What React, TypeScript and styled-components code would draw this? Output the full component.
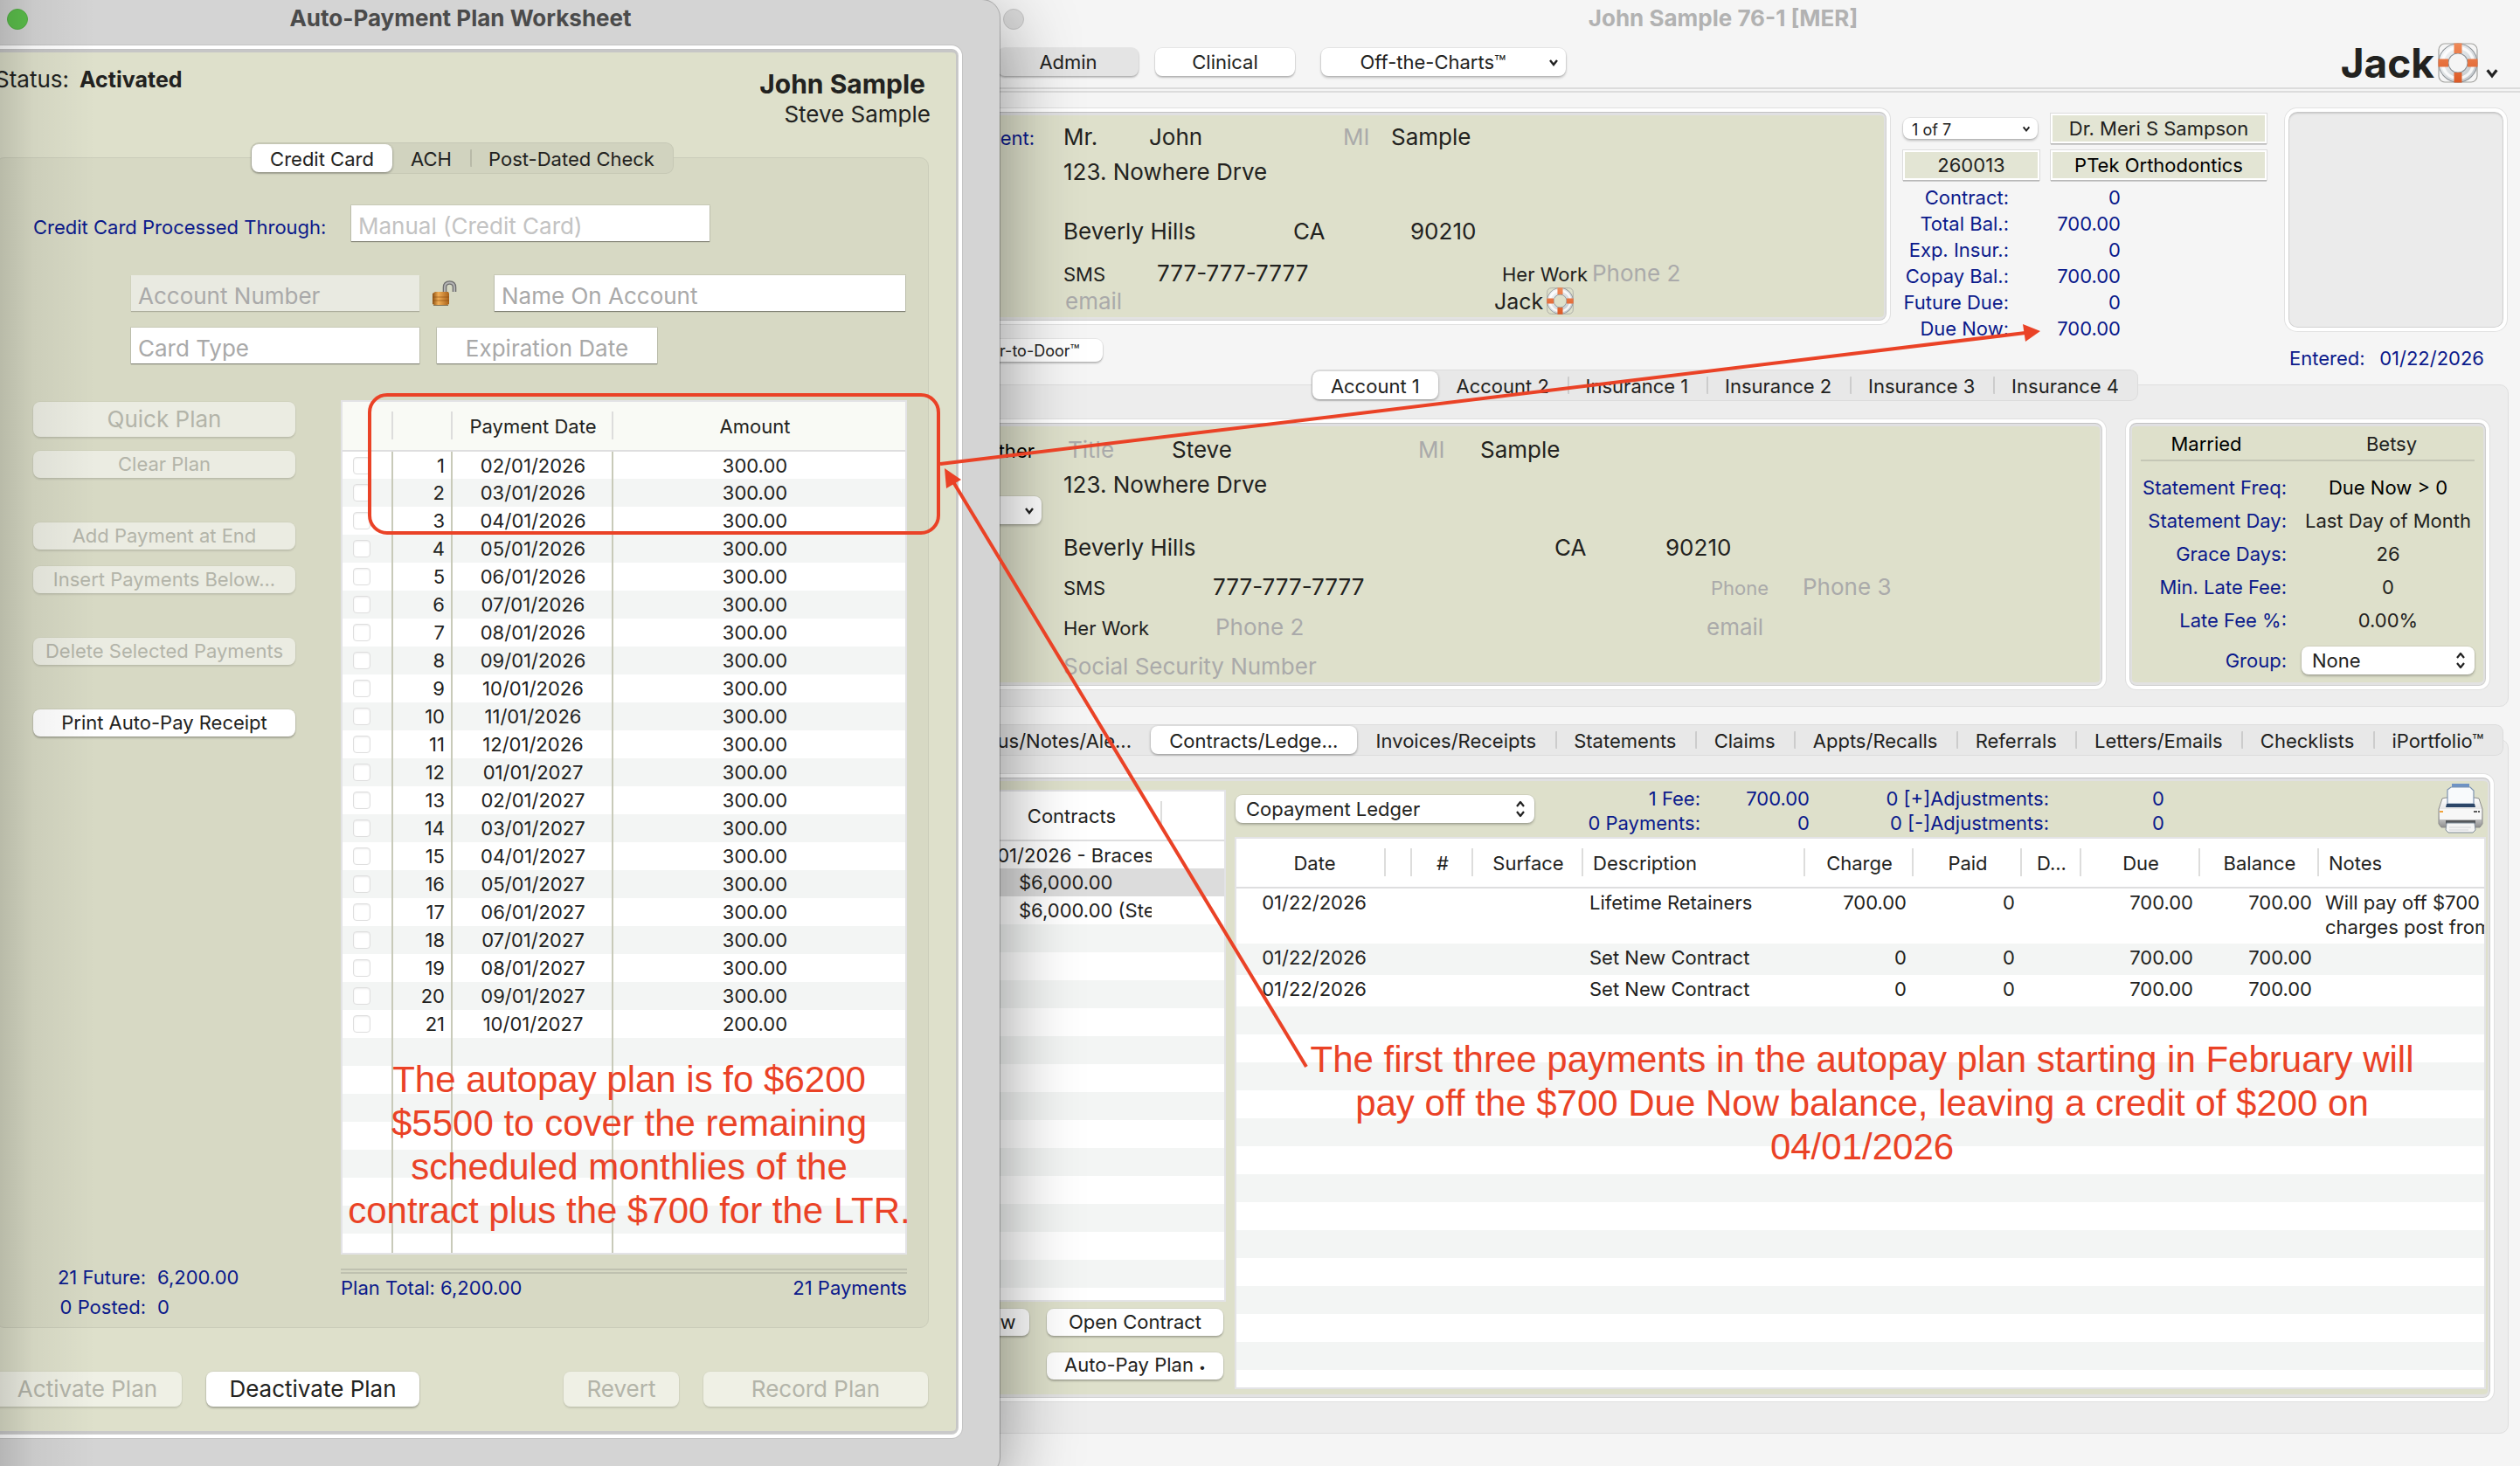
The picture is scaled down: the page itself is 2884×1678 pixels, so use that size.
import React from "react";
import styled, { createGlobalStyle, css } from "styled-components";

const olive = "#dee0cb";
const navy = "#0b1a8b";
const ink = "#222220";
const ghost = "#aaaaaa";
const stripe = "#f3f5f4";
const red = "#ea4226";

const GlobalStyle = createGlobalStyle`
  *, *::before, *::after { box-sizing: border-box; }
  html, body, #root { height: 100%; }
  body {
    margin: 0;
    overflow: hidden;
    color: ${ink};
    font-family: Inter, "Liberation Sans", sans-serif;
    font-size: 22px;
    line-height: 30px;
  }
  button, input, select {
    margin: 0;
    color: inherit;
    font: inherit;
  }
  table { border-collapse: collapse; border-spacing: 0; }
  th, td { padding: 0; font-weight: 400; }
`;

/* ---------- desktop and windows ---------- */

const Desktop = styled.div`
  position: relative;
  height: 100%;
  overflow: hidden;
  background: #f5f5f5;
`;

const MainWindow = styled.main`
  position: absolute;
  inset: 0 0 0 1064px;
  display: flex;
  flex-direction: column;
  background: #f5f5f5;
`;

const DialogWindow = styled.section`
  position: absolute;
  inset: 0 auto -10px -40px;
  width: 1184px;
  display: flex;
  flex-direction: column;
  padding: 0 43px 42px 12px;
  border-radius: 0 20px 20px 0;
  background: #d4d4d4;
  box-shadow: 0 0 0 1px rgba(0, 0, 0, 0.24), 0 24px 90px rgba(0, 0, 0, 0.44);

  &::after {
    content: "";
    position: absolute;
    inset: 0 auto 0 40px;
    width: 110px;
    background: linear-gradient(90deg, rgba(0, 0, 0, 0.14), rgba(0, 0, 0, 0.05) 35%, transparent);
    pointer-events: none;
  }
`;

const TitleBar = styled.header<{ $height: number; $left: number; $right: number; $muted?: boolean }>`
  display: flex;
  align-items: flex-start;
  flex: none;
  height: ${(p) => p.$height}px;
  padding: 0 ${(p) => p.$right}px 0 ${(p) => p.$left}px;
  color: ${(p) => (p.$muted ? "#b2b2b2" : "#4b4b4b")};
`;

const ZoomDot = styled.button<{ $active?: boolean }>`
  width: 24px;
  height: 24px;
  margin-top: 10px;
  padding: 0;
  border: 1px solid ${(p) => (p.$active ? "#52b043" : "#c6c6c6")};
  border-radius: 50%;
  background: ${(p) => (p.$active ? "#5cc04c" : "#dcdcdc")};
`;

const WindowTitle = styled.h1`
  flex: 1;
  margin: 0;
  font-size: 26px;
  font-weight: 700;
  line-height: 42px;
  text-align: center;
`;

const Frame = styled.div<{ $fill?: string; $edge?: string }>`
  border: 4px solid #fff;
  border-radius: 12px;
  background: ${(p) => p.$fill ?? olive};
  box-shadow:
    0 0 0 1px ${(p) => p.$edge ?? "#e0e0e0"},
    inset 0 1px 0 #c2c2c2,
    inset 0 0 0 1px #cfcfcf,
    inset 0 4px 0 ${(p) => (p.$edge ? "#c6c6c6" : "#e0e0e2")},
    inset 0 -4px 0 ${(p) => (p.$edge ? "#c9c9c9" : "#e2e2e2")},
    inset 3px 0 0 ${(p) => (p.$edge ? "#c6c6c6" : "#e0e0e0")},
    inset -3px 0 0 ${(p) => (p.$edge ? "#c6c6c6" : "#e0e0e0")};
`;

/* ---------- controls ---------- */

const PushButton = styled.button<{ $w?: number; $h?: number; $size?: number; $pressed?: boolean; $wide?: boolean }>`
  flex: none;
  width: ${(p) => (p.$wide ? "100%" : `${p.$w}px`)};
  height: ${(p) => p.$h ?? 31}px;
  padding: 0 0 1px;
  border: 0;
  border-radius: 8px;
  background: ${(p) => (p.$pressed ? "#e4e4e4" : "#fff")};
  box-shadow: 0 0 0 1px rgba(0, 0, 0, 0.06), 0 2px 2px rgba(0, 0, 0, 0.22);
  font-size: ${(p) => p.$size ?? 22}px;
  line-height: 28px;
  white-space: nowrap;

  small { font-size: 14px; }

  &:disabled {
    background: rgba(255, 255, 255, 0.5);
    box-shadow: 0 0 0 1px rgba(0, 0, 0, 0.03), 0 2px 2px rgba(0, 0, 0, 0.1);
    color: #b3b4a9;
  }
`;

const SelectBox = styled.span<{ $w: number; $h: number; $size?: number; $center?: boolean }>`
  position: relative;
  display: block;
  flex: none;
  width: ${(p) => p.$w}px;
  height: ${(p) => p.$h}px;

  select {
    display: block;
    width: 100%;
    height: 100%;
    padding: 0 24px 0 ${(p) => (p.$center ? 0 : p.$size ? 10 : 12)}px;
    border: 0;
    border-radius: 8px;
    background: #fff;
    box-shadow: 0 0 0 1px rgba(0, 0, 0, 0.06), 0 2px 3px rgba(0, 0, 0, 0.24);
    appearance: none;
    font-size: ${(p) => p.$size ?? 22}px;
    line-height: 28px;
    text-align-last: ${(p) => (p.$center ? "center" : "left")};
  }

  svg {
    position: absolute;
    top: 0;
    right: 8px;
    height: 100%;
    pointer-events: none;
  }
`;

function Chevron({ size = 12 }: { size?: number }) {
  return (
    <svg width={size} viewBox="0 0 12 12" fill="none" stroke="#222" strokeWidth="2.4" aria-hidden="true">
      <path d="M2 4l4 5 4-5" />
    </svg>
  );
}

function UpDown() {
  return (
    <svg width="16" viewBox="0 0 16 24" fill="none" stroke="#222" strokeWidth="2.2" strokeLinejoin="round" aria-hidden="true">
      <path d="M4 9l4-5 4 5M4 15l4 5 4-5" />
    </svg>
  );
}

const Segments = styled.div<{ $w?: number; $fill: string }>`
  display: flex;
  align-items: stretch;
  width: ${(p) => (p.$w ? `${p.$w}px` : "auto")};
  height: 36px;
  margin: ${(p) => (p.$w ? "-18px auto 0" : "-18px 5px 0 0")};
  padding: 2px 1px;
  border: 0;
  border-radius: 9px;
  background: ${(p) => p.$fill};
  box-shadow: inset 0 0 0 1px rgba(0, 0, 0, 0.05);
`;

const Segment = styled.button<{ $divider?: boolean }>`
  flex: 1 1 auto;
  padding: 2px 12px 0;
  border: 0;
  border-radius: 8px;
  background: ${(p) =>
    p.$divider ? "linear-gradient(rgba(0,0,0,.12), rgba(0,0,0,.12)) left center / 2px 20px no-repeat" : "transparent"};
  line-height: 28px;
  white-space: nowrap;

  &[aria-selected="true"] {
    background: #fff;
    box-shadow: 0 1px 3px rgba(0, 0, 0, 0.4);
  }
`;

function SegmentBar({ items, selected, width, fill, label }: { items: string[]; selected: number; width?: number; fill: string; label: string }) {
  return (
    <Segments role="tablist" aria-label={label} $w={width} $fill={fill}>
      {items.map((item, i) => (
        <Segment key={item} role="tab" aria-selected={i === selected} $divider={i > 0 && i !== selected && i !== selected + 1}>
          {item}
        </Segment>
      ))}
    </Segments>
  );
}

const GroupBox = styled.section<{ $grow?: boolean; $top: number }>`
  display: flex;
  flex-direction: column;
  flex: ${(p) => (p.$grow ? "1 1 0" : "none")};
  min-height: 0;
  margin: ${(p) => p.$top}px 13px ${(p) => (p.$grow ? 37 : 0)}px;
  border: 1px solid #dfdfdf;
  border-radius: 10px;
  background: #ededed;
`;

const Field = styled.input<{ $w: number; $small?: boolean; $indent?: number }>`
  flex: none;
  width: ${(p) => p.$w}px;
  height: 36px;
  padding: 0 0 0 ${(p) => p.$indent ?? 0}px;
  border: 0;
  outline: 0;
  background: transparent;
  font-size: ${(p) => (p.$small ? 22 : 26)}px;

  &::placeholder { color: ${ghost}; opacity: 1; }
`;

const BoxedField = styled.input<{ $w: number; $center?: boolean; $light?: boolean }>`
  flex: none;
  width: ${(p) => p.$w}px;
  height: 41px;
  padding: 6px 8px 0;
  border: 0;
  background: #fff;
  box-shadow: 0 0 0 1px rgba(0, 0, 0, 0.07), 0 1px 1px rgba(0, 0, 0, 0.35);
  font-size: 26px;
  text-align: ${(p) => (p.$center ? "center" : "left")};

  &::placeholder { color: ${(p) => (p.$light ? "#c3c3c3" : "#a9a9a9")}; opacity: 1; }
  &:disabled { background: #e9eae1; box-shadow: 0 1px 1px rgba(0, 0, 0, 0.2); }
`;

/* ---------- drawings ---------- */

function LifeBuoy({ size }: { size: number }) {
  return (
    <svg width={size} height={size} viewBox="0 0 46 46" aria-hidden="true">
      <defs>
        <linearGradient id={`ring${size}`} x1="0" y1="0" x2="1" y2="1">
          <stop offset="0" stopColor="#f4f6f8" />
          <stop offset="1" stopColor="#c3c8cc" />
        </linearGradient>
        <linearGradient id={`band${size}`} x1="0" y1="0" x2="0" y2="1">
          <stop offset="0" stopColor="#f08a58" />
          <stop offset="1" stopColor="#dc5a26" />
        </linearGradient>
      </defs>
      <rect x="1" y="1" width="44" height="44" rx="7" fill="none" stroke="#a3a3a0" strokeWidth="1.2" />
      <circle cx="23" cy="23" r="16.500" fill="none" stroke="#8a8f94" strokeWidth="12" />
      <circle cx="23" cy="23" r="16.500" fill="none" stroke={`url(#ring${size})`} strokeWidth="10" />
      <circle cx="23" cy="23" r="17.500" fill="none" stroke="#ffffff" strokeWidth="3.500" opacity="0.8" />
      <path d="M18.500 .5h9v11.500h-9zM18.500 34h9v11.500h-9zM.5 18.500h11.500v9H.5zM34 18.500h11.500v9H34z" fill={`url(#band${size})`} />
    </svg>
  );
}

function OpenLock() {
  return (
    <svg width="29" height="29" viewBox="0 0 29 29" aria-hidden="true">
      <defs>
        <linearGradient id="lockBody" x1="0" y1="0" x2="1" y2="0">
          <stop offset="0" stopColor="#8a4f12" />
          <stop offset="0.35" stopColor="#f0ad55" />
          <stop offset="1" stopColor="#a86119" />
        </linearGradient>
      </defs>
      <path d="M15 14V8q0-5.500 5.500-5.500T26 8v5" fill="none" stroke="#6d6d6d" strokeWidth="4.600" />
      <path d="M15 14V8q0-5.500 5.500-5.500T26 8v5" fill="none" stroke="#b4b4b4" strokeWidth="2" />
      <path d="M1 15l3-2h15l1 2v12l-2 1H3l-2-1z" fill="url(#lockBody)" />
      <path d="M1 19h19M1 23h19" stroke="#8a4a10" strokeWidth="1" opacity=".6" />
      <path d="M2 28.500h17" stroke="#4a3010" strokeWidth="1" opacity=".6" />
    </svg>
  );
}

function PrinterIcon() {
  return (
    <svg width="54" height="58" viewBox="0 0 54 58" aria-hidden="true">
      <defs>
        <linearGradient id="printerBody" x1="0" y1="0" x2="0" y2="1">
          <stop offset="0" stopColor="#ffffff" />
          <stop offset="0.6" stopColor="#d9d9d9" />
          <stop offset="1" stopColor="#8e8e8e" />
        </linearGradient>
      </defs>
      <path d="M17 1h20v8H17z" fill="#6f93c4" />
      <path d="M6 18q3-1 6-1h30q3 0 6 1l4 12v17l-3 4H5l-3-4V30z" fill="url(#printerBody)" stroke="#8b8b8b" strokeWidth="1" />
      <path d="M12 8l4-3h22l4 4v15H12z" fill="#f8fafc" stroke="#7d93b0" strokeWidth="1.200" />
      <path d="M11 24h32l1 4H10z" fill="#2c4668" />
      <path d="M3 30h48v12H3z" fill="#f7f7f7" />
      <path d="M10 43h34v4H10z" fill="#55585c" />
      <path d="M11 46h32l1 8-3 3H13l-3-3z" fill="#f4f4f4" stroke="#7f8b99" strokeWidth="1" />
      <path d="M14 51h25M14 54h22" stroke="#d2d4d8" strokeWidth="1" />
      <path d="M3 32h4v2H3z" fill="#f2a33a" />
      <path d="M42 32h4v2h-4zM47 32h2v2h-2z" fill="#5b5b5b" />
    </svg>
  );
}

/* ---------- dialog ---------- */

const DialogFrame = styled(Frame)`
  display: flex;
  flex-direction: column;
  flex: 1 1 0;
  min-height: 0;
`;

const DialogHead = styled.div`
  display: flex;
  justify-content: space-between;
  padding: 20px 32px 0 18px;
  font-size: 26px;
`;

const Status = styled.p`
  margin: 0;
  strong { margin-left: 12px; font-size: 25px; font-weight: 700; }
`;

const Patient = styled.p`
  margin: 0;
  padding-top: 2px;
  line-height: 34px;
  text-align: right;
  strong { display: block; padding-right: 6px; font-size: 30px; font-weight: 700; line-height: 36px; }
`;

const PlanBox = styled.section`
  display: flex;
  flex-direction: column;
  flex: 1 1 0;
  min-height: 0;
  margin: 32px 34px 0 19px;
  border: 1px solid #cbcdba;
  border-radius: 10px;
  background: #d7d9c4;
`;

const FormRow = styled.div<{ $top: number; $left: number; $gap?: number; $baseline?: boolean }>`
  display: flex;
  align-items: ${(p) => (p.$baseline ? "baseline" : "flex-start")};
  gap: ${(p) => p.$gap ?? 0}px;
  margin-top: ${(p) => p.$top}px;
  padding-left: ${(p) => p.$left}px;
`;

const WideLabel = styled.label`
  width: 364px;
  color: ${navy};
  white-space: nowrap;
`;

const LockButton = styled.button`
  width: 29px;
  height: 29px;
  margin: 6px 29px 0 0;
  padding: 0;
  border: 0;
  background: none;
  line-height: 0;
`;

const PlanBody = styled.div`
  display: flex;
  flex: 1 1 0;
  gap: 52px;
  min-height: 0;
  margin-top: 42px;
  padding: 0 24px 0 42px;
`;

const Actions = styled.div`
  display: flex;
  flex-direction: column;
  flex: none;
  gap: 51px;
  width: 300px;
  padding: 2px 0 6px;
`;

const ActionGroup = styled.div<{ $gap?: number }>`
  display: flex;
  flex-direction: column;
  gap: ${(p) => p.$gap ?? 0}px;
`;

const Counts = styled.dl`
  display: grid;
  grid-template-columns: 129px 1fr;
  column-gap: 13px;
  margin: auto 0 0;
  color: ${navy};
  line-height: 34px;
  dt { text-align: right; }
  dd { margin: 0; }
`;

const PlanColumn = styled.div`
  display: flex;
  flex-direction: column;
  flex: 1;
  min-width: 0;
  padding-bottom: 30px;
`;

const ListArea = styled.div<{ $lines?: boolean }>`
  flex: 1 1 0;
  min-height: 0;
  overflow: hidden;
  border: 2px solid #e3e3e6;
  background: ${(p) =>
    p.$lines
      ? css`
          linear-gradient(#c8cab9, #c8cab9) 56px 0 / 2px 100% no-repeat,
          linear-gradient(#c8cab9, #c8cab9) 124px 0 / 2px 100% no-repeat,
          linear-gradient(#c8cab9, #c8cab9) 308px 0 / 2px 100% no-repeat,
        `
      : ""}
    linear-gradient(#fff 50%, ${stripe} 50%) 0 56px / 100% 64px repeat-y;
`;

const headerRow = css`
  height: 56px;
  border-bottom: 2px solid #dededf;
  line-height: 28px;
  white-space: nowrap;
`;

const Divider = css`
  background: linear-gradient(#dddddc, #dddddc) right 11px / 2px 32px no-repeat;
`;

const PlanTable = styled.table`
  width: 100%;
  table-layout: fixed;
  text-align: center;

  thead { background: #f9faf5; }
  thead th { ${headerRow} }
  thead th:not(:last-child) { ${Divider} }
  tbody tr { height: 32px; line-height: 30px; }
  td:nth-child(1) { padding-right: 22px; }
  td:nth-child(2) { padding-right: 9px; text-align: right; }
  td:last-child, th:last-child { padding-right: 10px; }
`;

const RowCheck = styled.input`
  display: block;
  width: 20px;
  height: 20px;
  margin: 0 0 0 12px;
  border: 1px solid #dedede;
  border-radius: 4px;
  background: #fff;
  box-shadow: inset 0 1px 2px rgba(0, 0, 0, 0.08);
  appearance: none;
`;

const DoubleRule = styled.hr<{ $tone: string; $top?: number }>`
  flex: none;
  width: 100%;
  height: 6px;
  margin: ${(p) => p.$top ?? 0}px 0 0;
  border: solid ${(p) => p.$tone};
  border-width: 2px 0;
`;

const Totals = styled.div`
  display: flex;
  justify-content: space-between;
  margin-top: 1px;
  color: ${navy};
`;

const DialogFoot = styled.footer`
  display: flex;
  gap: 28px;
  margin-top: 50px;
  padding: 0 35px 32px 16px;
`;

const Spacer = styled.span`
  flex: 1;
`;

const payments = Array.from({ length: 21 }, (_, i) => {
  const month = ((i + 1) % 12) + 1;
  const year = i < 11 ? 2026 : 2027;
  return { n: i + 1, date: `${String(month).padStart(2, "0")}/01/${year}`, amount: i === 20 ? "200.00" : "300.00" };
});

function PaymentDialog() {
  return (
    <DialogWindow aria-label="Auto-Payment Plan Worksheet">
      <TitleBar $height={52} $left={36} $right={79}>
        <ZoomDot $active aria-label="Zoom window" />
        <WindowTitle>Auto-Payment Plan Worksheet</WindowTitle>
      </TitleBar>
      <DialogFrame $edge="#c4c4c4">
        <DialogHead>
          <Status>
            Status:<strong>Activated</strong>
          </Status>
          <Patient>
            <strong>John Sample</strong>Steve Sample
          </Patient>
        </DialogHead>
        <PlanBox>
          <SegmentBar label="Payment method" items={["Credit Card", "ACH", "Post-Dated Check"]} selected={0} width={484} fill="#d1d3bf" />
          <FormRow $top={36} $left={42} $baseline>
            <WideLabel htmlFor="processor">Credit Card Processed Through:</WideLabel>
            <BoxedField id="processor" $w={410} $light placeholder="Manual (Credit Card)" />
          </FormRow>
          <FormRow $top={39} $left={154} $gap={14}>
            <BoxedField $w={330} disabled placeholder="Account Number" aria-label="Account Number" />
            <LockButton aria-label="Unlocked">
              <OpenLock />
            </LockButton>
            <BoxedField $w={470} placeholder="Name On Account" aria-label="Name On Account" />
          </FormRow>
          <FormRow $top={19} $left={154} $gap={20}>
            <BoxedField $w={330} placeholder="Card Type" aria-label="Card Type" />
            <BoxedField $w={252} $center placeholder="Expiration Date" aria-label="Expiration Date" />
          </FormRow>
          <PlanBody>
            <Actions>
              <ActionGroup $gap={16}>
                <PushButton $wide $h={40} $size={26} disabled>Quick Plan</PushButton>
                <PushButton $wide disabled>Clear Plan</PushButton>
              </ActionGroup>
              <ActionGroup $gap={19}>
                <PushButton $wide disabled>Add Payment at End</PushButton>
                <PushButton $wide disabled>Insert Payments Below...</PushButton>
              </ActionGroup>
              <PushButton $wide disabled>Delete Selected Payments</PushButton>
              <PushButton $wide>Print Auto-Pay Receipt</PushButton>
              <Counts>
                <dt>21 Future:</dt>
                <dd>6,200.00</dd>
                <dt>0 Posted:</dt>
                <dd>0</dd>
              </Counts>
            </Actions>
            <PlanColumn>
              <ListArea $lines>
                <PlanTable>
                  <colgroup>
                    <col style={{ width: 58 }} />
                    <col style={{ width: 68 }} />
                    <col style={{ width: 184 }} />
                    <col />
                  </colgroup>
                  <thead>
                    <tr>
                      <th />
                      <th />
                      <th>Payment Date</th>
                      <th>Amount</th>
                    </tr>
                  </thead>
                  <tbody>
                    {payments.map((p) => (
                      <tr key={p.n}>
                        <td>
                          <RowCheck type="checkbox" aria-label={`Select payment ${p.n}`} />
                        </td>
                        <td>{p.n}</td>
                        <td>{p.date}</td>
                        <td>{p.amount}</td>
                      </tr>
                    ))}
                  </tbody>
                </PlanTable>
              </ListArea>
              <DoubleRule $tone="#bfc1b0" $top={16} />
              <Totals>
                <span>Plan Total: 6,200.00</span>
                <span>21 Payments</span>
              </Totals>
            </PlanColumn>
          </PlanBody>
        </PlanBox>
        <DialogFoot>
          <PushButton $w={216} $h={40} $size={26} disabled>Activate Plan</PushButton>
          <PushButton $w={244} $h={40} $size={26}>Deactivate Plan</PushButton>
          <Spacer />
          <PushButton $w={132} $h={40} $size={26} disabled>Revert</PushButton>
          <PushButton $w={257} $h={40} $size={26} disabled>Record Plan</PushButton>
        </DialogFoot>
      </DialogFrame>
    </DialogWindow>
  );
}

/* ---------- main window ---------- */

const Toolbar = styled.nav`
  display: flex;
  flex: none;
  height: 56px;
  padding: 11px 24px 0 78px;
`;

const ToolGroup = styled.div`
  display: flex;
  gap: 19px;
  margin-right: 30px;
`;

const Brand = styled.button`
  display: flex;
  align-items: center;
  height: 46px;
  margin: -6px 0 0 auto;
  padding: 0;
  border: 0;
  background: none;
  font-size: 46px;
  font-weight: 700;
  line-height: 46px;
  > svg:first-of-type { margin: 0 8px 0 4px; }
  > svg:last-of-type { margin-top: 22px; }
`;

const Overview = styled.section`
  display: grid;
  grid-template-columns: minmax(0, 1fr) 431px 275px;
  flex: none;
  padding: 18px 15px 0 13px;
`;

const PatientColumn = styled.div`
  display: flex;
  flex-direction: column;
  gap: 17px;
`;

const PatientFrame = styled(Frame)`
  height: 247px;
  padding-top: 8px;
  overflow: hidden;
`;

const DoorButton = styled(PushButton)`
  padding-left: 6px;
`;

const FieldRow = styled.div<{ $h: number; $top?: number; $labelW: number }>`
  display: flex;
  align-items: baseline;
  height: ${(p) => p.$h}px;
  margin-top: ${(p) => p.$top ?? 0}px;
  padding-left: ${(p) => p.$labelW}px;
  padding-top: ${(p) => (p.$h - 36) / 2}px;
`;

const Lead = styled.label<{ $w: number; $dark?: boolean }>`
  flex: none;
  width: ${(p) => p.$w}px;
  margin-left: -${(p) => p.$w}px;
  padding-right: 33px;
  color: ${(p) => (p.$dark ? "#000" : navy)};
  text-align: right;
`;

const MessageLink = styled.button`
  display: flex;
  align-items: center;
  gap: 4px;
  padding: 0;
  border: 0;
  background: none;
  font-size: 25px;
  line-height: 32px;
`;

const Balances = styled.div`
  padding: 5px 0 0 15px;
`;

const BadgeGrid = styled.div`
  display: grid;
  grid-template-columns: 156px 247px;
  grid-template-rows: 36px 36px;
  align-items: center;
  gap: 6px 13px;
  width: 416px;
`;

const Badge = styled.output<{ $dark?: boolean }>`
  display: block;
  height: 34px;
  border: 2px solid #fff;
  background: #e3e5d4;
  box-shadow: 0 0 0 1px rgba(0, 0, 0, 0.1), 0 2px 0 rgba(0, 0, 0, 0.16);
  color: ${(p) => (p.$dark ? "#000" : ink)};
  text-align: center;
  white-space: nowrap;
`;

const BalanceList = styled.dl`
  display: grid;
  grid-template-columns: 121px 128px;
  margin: 4px 0 0;
  color: ${navy};
  text-align: right;
  white-space: nowrap;
  dd { margin: 0; }
`;

const PhotoColumn = styled.div`
  padding-left: 21px;
  p {
    display: flex;
    justify-content: space-between;
    margin: 18px 26px 0 5px;
    color: ${navy};
    line-height: 26px;
    white-space: nowrap;
  }
`;

const Photo = styled.div`
  height: 255px;
  border: 4px solid #fff;
  border-radius: 14px;
  background: #ebebeb;
  box-shadow: 0 0 0 1px #e2e2e2, inset 0 2px 2px #c8c8c8, inset 0 0 0 1px #d2d2d2;
`;

const AccountPanels = styled.div`
  display: grid;
  grid-template-columns: minmax(0, 1fr) 416px;
  gap: 23px;
  padding: 21px 21px 19px;
`;

const AccountFrame = styled(Frame)`
  height: 309px;
  padding-top: 10px;
  overflow: hidden;
`;

const RelationRow = styled.div`
  height: 38px;
  margin-top: -6px;
`;

const BillingFrame = styled(Frame)`
  height: 309px;
  padding: 9px 13px 0;
`;

const Couple = styled.div`
  display: grid;
  grid-template-columns: 150px 1fr;
  column-gap: 42px;
  height: 35px;
  margin-bottom: 11px;
  border-bottom: 2px solid #c5c7b6;
  text-align: center;
  b { color: #000; font-weight: 400; }
`;

const Terms = styled.div<{ $h?: number }>`
  display: grid;
  grid-template-columns: 167px 198px;
  align-items: center;
  column-gap: 17px;
  height: ${(p) => p.$h ?? 38}px;
  white-space: nowrap;
  label { color: ${navy}; text-align: right; }
  output { text-align: center; }
  output[data-strong="true"] { color: #000; }
`;

const LedgerFrame = styled(Frame)`
  display: grid;
  grid-template-columns: 305px minmax(0, 1fr);
  column-gap: 10px;
  flex: 1 1 0;
  min-height: 0;
  margin: 21px 16px 36px;
  padding-right: 5px;
`;

const ContractColumn = styled.div`
  display: flex;
  flex-direction: column;
  min-height: 0;
  padding-top: 14px;
`;

const ContractTable = styled.table`
  width: 100%;
  table-layout: fixed;

  thead { background: #fff; }
  thead th { ${headerRow} }
  thead th:first-child { padding-left: 23px; ${Divider} }
  tbody tr { height: 32px; line-height: 30px; }
  tbody tr[aria-selected="true"] { background: #dcdcdc; }
  tbody tr:nth-child(n + 3) { background: #fff; }
`;

const Clip = styled.div<{ $indent: number }>`
  margin-right: 12px;
  padding-left: ${(p) => p.$indent}px;
  overflow: hidden;
  white-space: nowrap;
`;

const ContractButtons = styled.div<{ $top: number; $bottom?: number }>`
  display: flex;
  justify-content: flex-end;
  gap: 20px;
  margin: ${(p) => p.$top}px 3px ${(p) => p.$bottom ?? 0}px 0;
`;

const LedgerColumn = styled.div`
  display: flex;
  flex-direction: column;
  min-height: 0;
  padding-bottom: 10px;
`;

const LedgerBar = styled.div`
  display: flex;
  align-items: flex-start;
  height: 68px;
  padding: 20px 0 0 1px;
`;

const Summary = styled.dl`
  display: grid;
  grid-template-columns: 190px 125px 274px 132px;
  margin: -10px 0 0;
  color: ${navy};
  line-height: 28px;
  text-align: right;
  white-space: nowrap;
  dd { margin: 0; }
`;

const PrintButton = styled.button`
  margin: -14px 2px 0 auto;
  padding: 0;
  border: 0;
  background: none;
  line-height: 0;
`;

const LedgerArea = styled.div`
  display: flex;
  flex-direction: column;
  flex: 1 1 0;
  min-height: 0;
  border: 2px solid #e3e3e6;
  background: #fff;
`;

const LedgerFill = styled.div`
  flex: 1;
  background: linear-gradient(${stripe} 50%, #fff 50%) 0 0 / 100% 64px repeat-y;
`;

const LedgerTable = styled.table`
  width: 100%;
  table-layout: fixed;

  thead th { ${headerRow} text-align: center; }
  thead th:not(:last-child) { ${Divider} }
  thead th:first-child { padding-left: 8px; }
  thead th:nth-child(5), thead th:last-child { padding-left: 11px; text-align: left; }
  tbody tr:nth-child(even) { background: ${stripe}; }
  td {
    padding: 2px 8px 0 0;
    overflow: hidden;
    line-height: 28px;
    text-align: right;
    vertical-align: top;
    white-space: pre;
  }
  td:nth-child(1) { padding-right: 22px; }
  td:nth-child(5), td:last-child { padding: 2px 0 0 7px; text-align: left; }
`;

const LedgerRow = styled.tr<{ $h: number }>`
  height: ${(p) => p.$h}px;
`;

const balances = [
  ["Contract:", "0"],
  ["Total Bal.:", "700.00"],
  ["Exp. Insur.:", "0"],
  ["Copay Bal.:", "700.00"],
  ["Future Due:", "0"],
  ["Due Now:", "700.00"],
];

const terms = [
  ["Statement Freq:", "Due Now > 0"],
  ["Statement Day:", "Last Day of Month"],
  ["Grace Days:", "26"],
  ["Min. Late Fee:", "0"],
  ["Late Fee %:", "0.00%"],
];

const ledgerColumns: [string, number | undefined][] = [
  ["Date", 171],
  ["", 30],
  ["#", 70],
  ["Surface", 126],
  ["Description", 254],
  ["Charge", 124],
  ["Paid", 124],
  ["D...", 68],
  ["Due", 136],
  ["Balance", 136],
  ["Notes", undefined],
];

const ledgerRows = [
  { h: 64, cells: ["01/22/2026", "", "", "", "Lifetime Retainers", "700.00", "0", "", "700.00", "700.00", "Will pay off $700\ncharges post from"] },
  { h: 36, cells: ["01/22/2026", "", "", "", "Set New Contract", "0", "0", "", "700.00", "700.00", ""] },
  { h: 36, cells: ["01/22/2026", "", "", "", "Set New Contract", "0", "0", "", "700.00", "700.00", ""] },
];

function PatientWindow() {
  return (
    <MainWindow>
      <TitleBar $height={44} $left={84} $right={112} $muted>
        <ZoomDot aria-label="Zoom window" />
        <WindowTitle>John Sample 76-1 [MER]</WindowTitle>
      </TitleBar>
      <Toolbar>
        <ToolGroup>
          <PushButton $w={161} $h={32} $pressed>Admin</PushButton>
          <PushButton $w={160} $h={32}>Clinical</PushButton>
        </ToolGroup>
        <SelectBox $w={280} $h={32} $center>
          <select aria-label="Off-the-Charts">
            <option>Off-the-Charts™</option>
          </select>
          <Chevron />
        </SelectBox>
        <Brand>
          Jack
          <LifeBuoy size={46} />
          <Chevron size={16} />
        </Brand>
      </Toolbar>
      <DoubleRule $tone="#dcdcdc" />

      <Overview>
        <PatientColumn>
          <PatientFrame>
            <FieldRow $h={40} $labelW={136}>
              <Lead $w={136} htmlFor="prefix">Patient:</Lead>
              <Field id="prefix" $w={98} defaultValue="Mr." />
              <Field $w={222} defaultValue="John" aria-label="First name" />
              <Field $w={55} placeholder="MI" aria-label="Middle initial" />
              <Field $w={200} defaultValue="Sample" aria-label="Last name" />
            </FieldRow>
            <FieldRow $h={40} $labelW={136}>
              <Field $w={500} defaultValue="123. Nowhere Drve" aria-label="Street" />
            </FieldRow>
            <FieldRow $h={40} $top={28} $labelW={136}>
              <Field $w={263} defaultValue="Beverly Hills" aria-label="City" />
              <Field $w={134} defaultValue="CA" aria-label="State" />
              <Field $w={120} defaultValue="90210" aria-label="Zip" />
            </FieldRow>
            <FieldRow $h={36} $top={10} $labelW={136}>
              <Field $small $w={107} defaultValue="SMS" aria-label="Phone 1 type" />
              <Field $w={395} defaultValue="777-777-7777" aria-label="Phone 1" />
              <Field $small $w={103} defaultValue="Her Work" aria-label="Phone 2 type" />
              <Field $w={120} placeholder="Phone 2" aria-label="Phone 2" />
            </FieldRow>
            <FieldRow $h={36} $top={-4} $labelW={136}>
              <Field $w={493} $indent={2} placeholder="email" aria-label="Email" />
              <MessageLink>
                Jack
                <LifeBuoy size={31} />
              </MessageLink>
            </FieldRow>
          </PatientFrame>
          <DoorButton $w={185} $h={26} $size={18}>Door-to-Door™</DoorButton>
        </PatientColumn>

        <Balances>
          <BadgeGrid>
            <SelectBox $w={154} $h={24} $size={18}>
              <select aria-label="Patient in list">
                <option>1 of 7</option>
              </select>
              <Chevron size={10} />
            </SelectBox>
            <Badge>Dr. Meri S Sampson</Badge>
            <Badge>260013</Badge>
            <Badge $dark>PTek Orthodontics</Badge>
          </BadgeGrid>
          <BalanceList>
            {balances.map(([label, value]) => (
              <React.Fragment key={label}>
                <dt>{label}</dt>
                <dd>{value}</dd>
              </React.Fragment>
            ))}
          </BalanceList>
        </Balances>

        <PhotoColumn>
          <Photo role="img" aria-label="Patient photo" />
          <p>
            <span>Entered:</span>
            <span>01/22/2026</span>
          </p>
        </PhotoColumn>
      </Overview>

      <GroupBox $top={17}>
        <SegmentBar
          label="Accounts"
          items={["Account 1", "Account 2", "Insurance 1", "Insurance 2", "Insurance 3", "Insurance 4"]}
          selected={0}
          width={946}
          fill="#e8e8e8"
        />
        <AccountPanels>
          <AccountFrame>
            <FieldRow $h={40} $labelW={114}>
              <Lead $w={114} $dark htmlFor="title">Mother</Lead>
              <Field id="title" $w={124} $indent={5} placeholder="Title" />
              <Field $w={282} defaultValue="Steve" aria-label="Account first name" />
              <Field $w={71} placeholder="MI" aria-label="Account middle initial" />
              <Field $w={200} defaultValue="Sample" aria-label="Account last name" />
            </FieldRow>
            <FieldRow $h={40} $labelW={114}>
              <Field $w={500} defaultValue="123. Nowhere Drve" aria-label="Account street" />
            </FieldRow>
            <RelationRow>
              <SelectBox $w={89} $h={32}>
                <select aria-label="Relation" />
                <Chevron />
              </SelectBox>
            </RelationRow>
            <FieldRow $h={40} $labelW={114}>
              <Field $w={562} defaultValue="Beverly Hills" aria-label="Account city" />
              <Field $w={127} defaultValue="CA" aria-label="Account state" />
              <Field $w={120} defaultValue="90210" aria-label="Account zip" />
            </FieldRow>
            <FieldRow $h={46} $top={2} $labelW={114}>
              <Field $small $w={171} defaultValue="SMS" aria-label="Account phone 1 type" />
              <Field $w={570} defaultValue="777-777-7777" aria-label="Account phone 1" />
              <Field $small $w={105} placeholder="Phone" aria-label="Account phone 3 type" />
              <Field $w={150} placeholder="Phone 3" aria-label="Account phone 3" />
            </FieldRow>
            <FieldRow $h={46} $labelW={114}>
              <Field $small $w={171} defaultValue="Her Work" aria-label="Account phone 2 type" />
              <Field $w={565} $indent={3} placeholder="Phone 2" aria-label="Account phone 2" />
              <Field $w={200} placeholder="email" aria-label="Account email" />
            </FieldRow>
            <FieldRow $h={44} $labelW={114}>
              <Field $w={400} placeholder="Social Security Number" aria-label="Social Security Number" />
            </FieldRow>
          </AccountFrame>
          <BillingFrame>
            <Couple>
              <b>Married</b>
              <span>Betsy</span>
            </Couple>
            {terms.map(([label, value], i) => (
              <Terms key={label}>
                <label htmlFor={`term${i}`}>{label}</label>
                <output id={`term${i}`} data-strong={i === 0}>{value}</output>
              </Terms>
            ))}
            <Terms $h={54}>
              <label htmlFor="group">Group:</label>
              <SelectBox $w={198} $h={32}>
                <select id="group">
                  <option>None</option>
                </select>
                <UpDown />
              </SelectBox>
            </Terms>
          </BillingFrame>
        </AccountPanels>
      </GroupBox>

      <GroupBox $top={37} $grow>
        <SegmentBar
          label="Sections"
          items={[
            "Status/Notes/Ale...",
            "Contracts/Ledge...",
            "Invoices/Receipts",
            "Statements",
            "Claims",
            "Appts/Recalls",
            "Referrals",
            "Letters/Emails",
            "Checklists",
            "iPortfolio™",
          ]}
          selected={1}
          fill="#e8e8e8"
        />
        <LedgerFrame>
          <ContractColumn>
            <ListArea>
              <ContractTable>
                <colgroup>
                  <col style={{ width: 230 }} />
                  <col />
                </colgroup>
                <thead>
                  <tr>
                    <th>Contracts</th>
                    <th />
                  </tr>
                </thead>
                <tbody>
                  <tr>
                    <td><Clip $indent={6}>02/01/2026 - Braces</Clip></td>
                    <td />
                  </tr>
                  <tr aria-selected="true">
                    <td><Clip $indent={66}>$6,000.00</Clip></td>
                    <td />
                  </tr>
                  <tr>
                    <td><Clip $indent={66}>$6,000.00 (Steve)</Clip></td>
                    <td />
                  </tr>
                </tbody>
              </ContractTable>
            </ListArea>
            <ContractButtons $top={8}>
              <PushButton $w={78}>New</PushButton>
              <PushButton $w={202}>Open Contract</PushButton>
            </ContractButtons>
            <ContractButtons $top={19} $bottom={21}>
              <PushButton $w={202}>
                Auto-Pay Plan <small>•</small>
              </PushButton>
            </ContractButtons>
          </ContractColumn>
          <LedgerColumn>
            <LedgerBar>
              <SelectBox $w={342} $h={32}>
                <select aria-label="Ledger">
                  <option>Copayment Ledger</option>
                </select>
                <UpDown />
              </SelectBox>
              <Summary>
                <dt>1 Fee:</dt>
                <dd>700.00</dd>
                <dt>0 [+]Adjustments:</dt>
                <dd>0</dd>
                <dt>0 Payments:</dt>
                <dd>0</dd>
                <dt>0 [-]Adjustments:</dt>
                <dd>0</dd>
              </Summary>
              <PrintButton aria-label="Print">
                <PrinterIcon />
              </PrintButton>
            </LedgerBar>
            <LedgerArea>
              <LedgerTable>
                <colgroup>
                  {ledgerColumns.map(([name, width]) => (
                    <col key={name} style={{ width }} />
                  ))}
                </colgroup>
                <thead>
                  <tr>
                    {ledgerColumns.map(([name]) => (
                      <th key={name}>{name}</th>
                    ))}
                  </tr>
                </thead>
                <tbody>
                  {ledgerRows.map((row, i) => (
                    <LedgerRow key={i} $h={row.h}>
                      {row.cells.map((cell, j) => (
                        <td key={j}>{cell}</td>
                      ))}
                    </LedgerRow>
                  ))}
                </tbody>
              </LedgerTable>
              <LedgerFill />
            </LedgerArea>
          </LedgerColumn>
        </LedgerFrame>
      </GroupBox>
    </MainWindow>
  );
}

/* ---------- notes drawn over both windows ---------- */

const Marks = styled.svg`
  position: absolute;
  top: 0;
  left: 0;
  pointer-events: none;
`;

const Note = styled.p<{ $x: number; $y: number; $w: number }>`
  position: absolute;
  left: ${(p) => p.$x}px;
  top: ${(p) => p.$y}px;
  width: ${(p) => p.$w}px;
  margin: 0;
  color: ${red};
  font: 42px / 50px "Liberation Sans", Arial, sans-serif;
  text-align: center;
  white-space: pre-line;
  pointer-events: none;
`;

export default function App() {
  return (
    <>
      <GlobalStyle />
      <Desktop>
        <PatientWindow />
        <PaymentDialog />
        <Marks width="2884" height="1678" viewBox="0 0 2884 1678" fill="none" stroke={red} strokeWidth="4" aria-hidden="true">
          <rect x="423" y="452" width="651" height="158" rx="20" />
          <path d="M1076 531L2318 381" />
          <path d="M1495 1221L1090 550" />
          <path d="M2335 379l-20-8 3 20z" fill={red} stroke="none" />
          <path d="M1081 536l2 23 17-10z" fill={red} stroke="none" />
        </Marks>
        <Note $x={380} $y={1211} $w={680}>
          {"The autopay plan is fo $6200\n$5500 to cover the remaining\nscheduled monthlies of the\ncontract plus the $700 for the LTR."}
        </Note>
        <Note $x={1481} $y={1188} $w={1300}>
          {"The first three payments in the autopay plan starting in February will\npay off the $700 Due Now balance, leaving a credit of $200 on\n04/01/2026"}
        </Note>
      </Desktop>
    </>
  );
}
